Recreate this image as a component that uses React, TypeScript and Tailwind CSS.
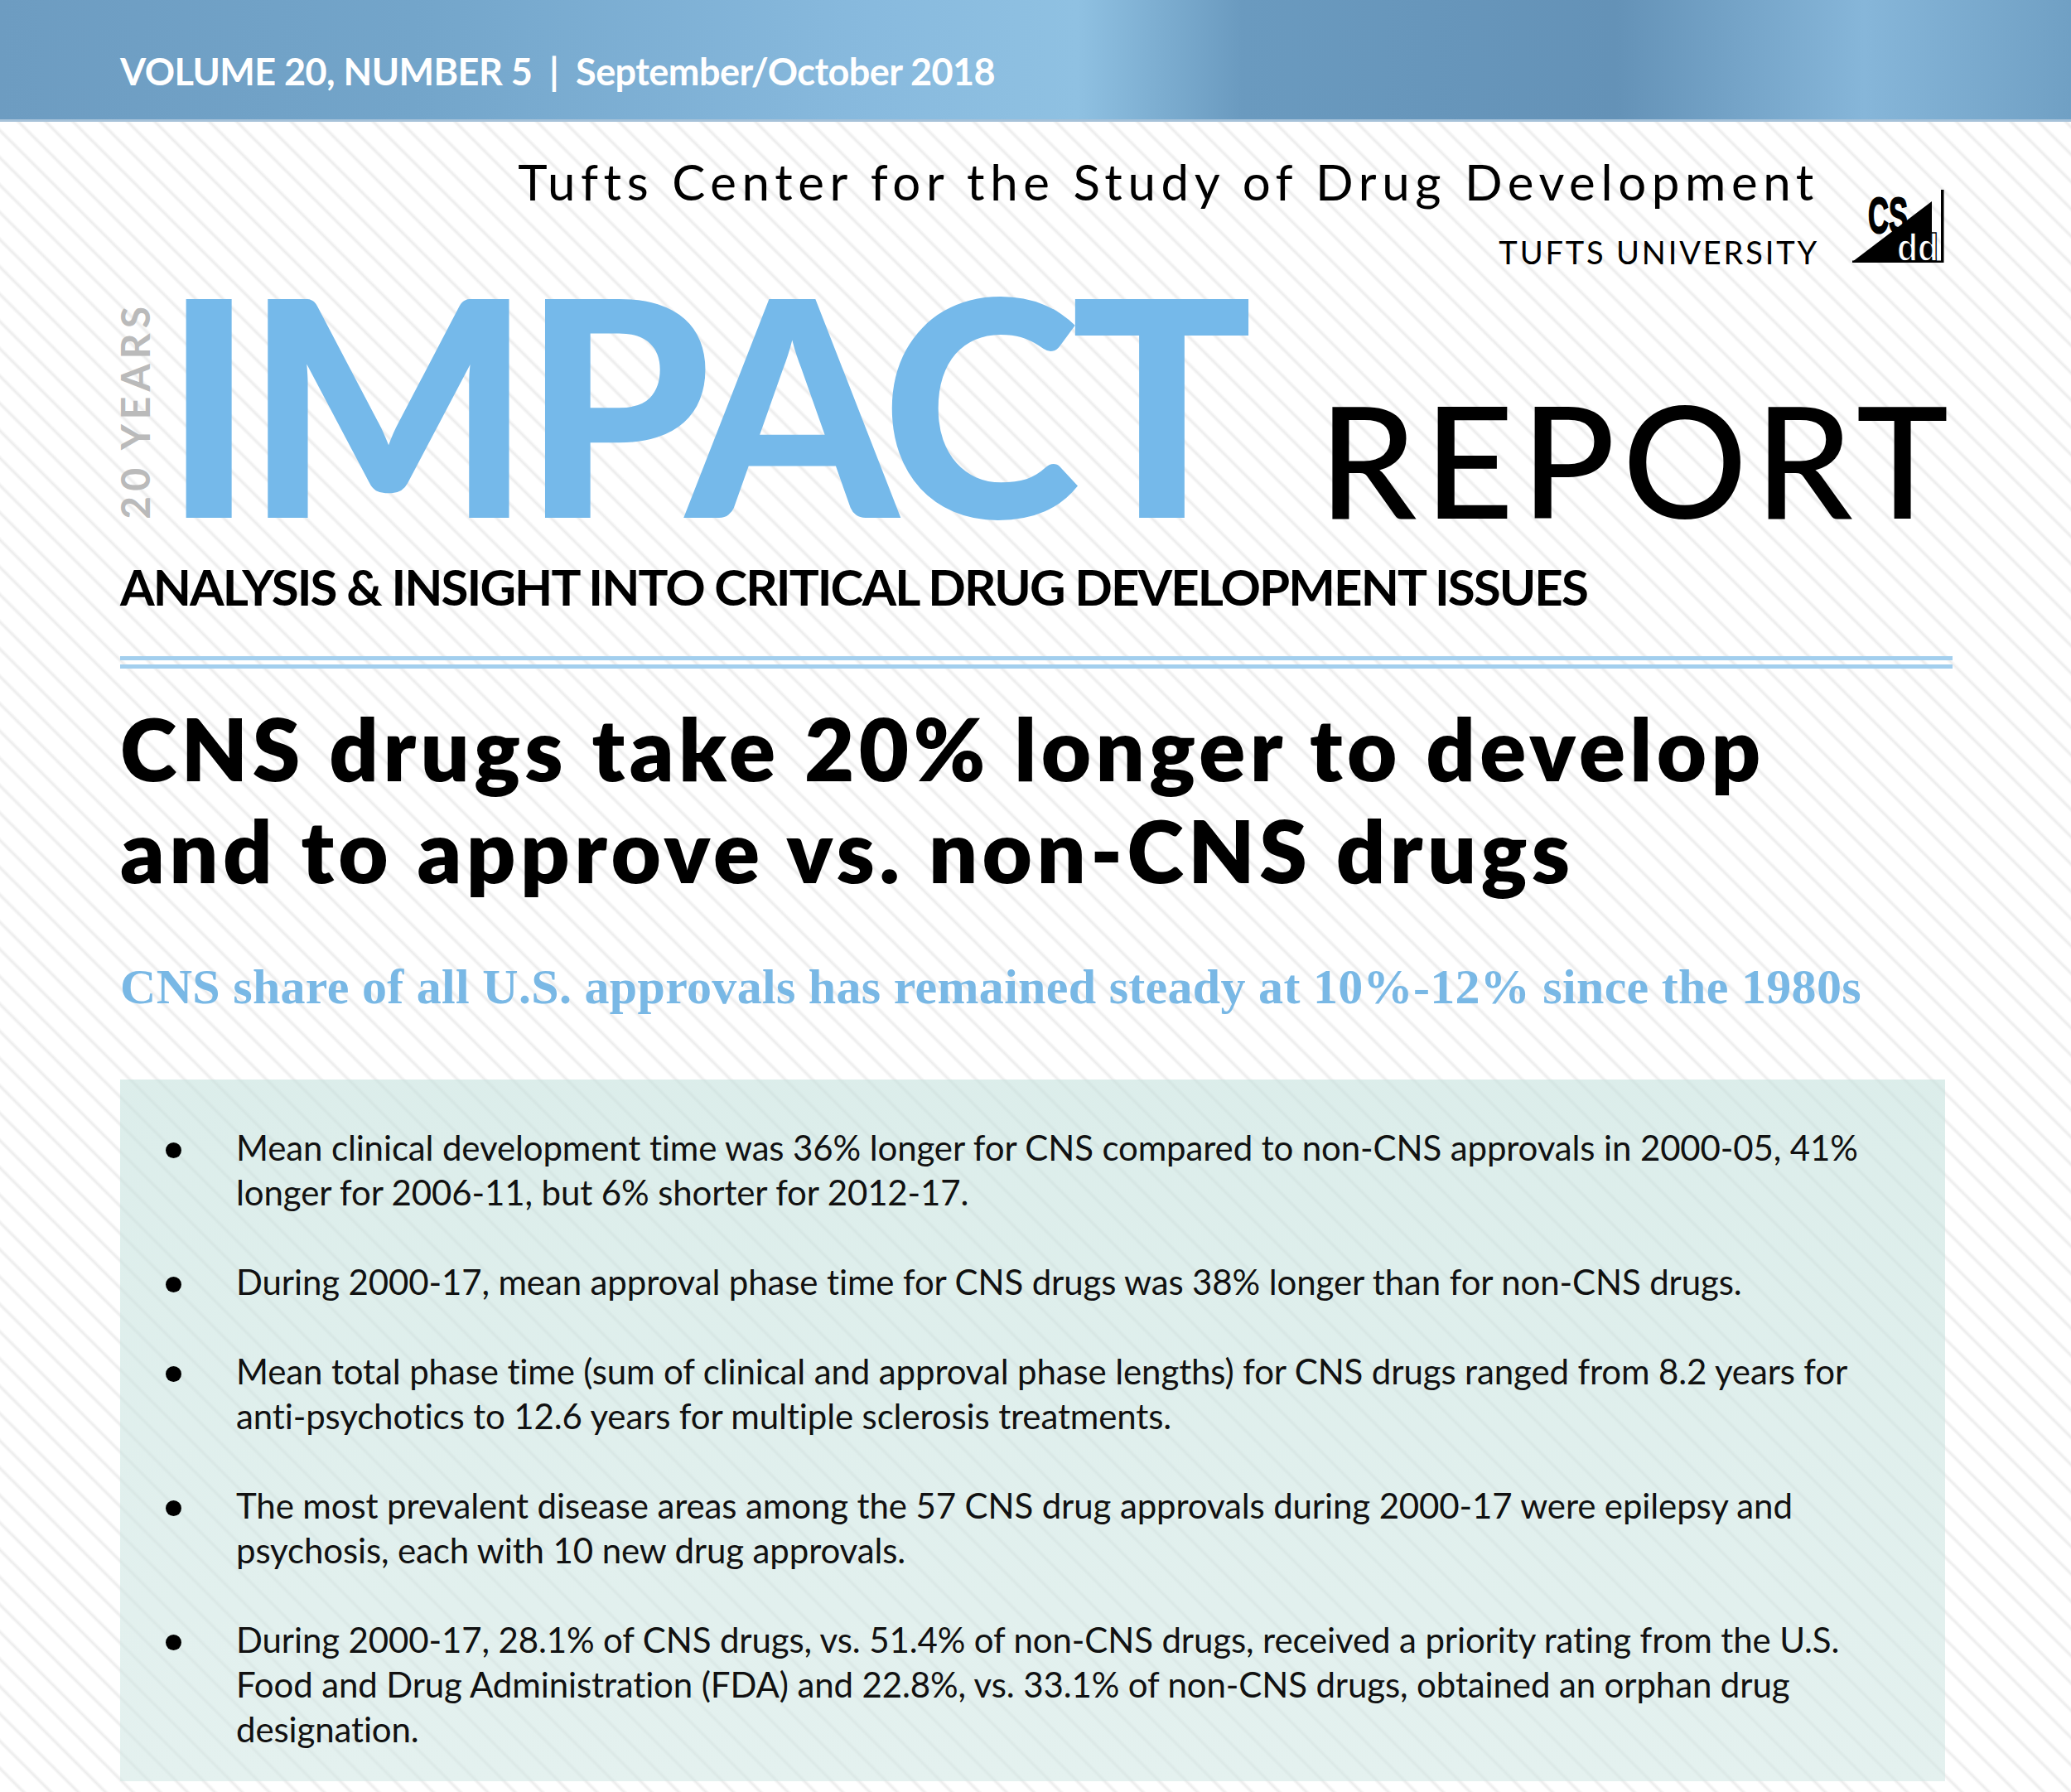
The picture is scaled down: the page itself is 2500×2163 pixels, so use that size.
const bullets: string[][] = [
  [
    "Mean clinical development time was 36% longer for CNS compared to non-CNS approvals in 2000-05, 41%",
    "longer for 2006-11, but 6% shorter for 2012-17.",
  ],
  ["During 2000-17, mean approval phase time for CNS drugs was 38% longer than for non-CNS drugs."],
  [
    "Mean total phase time (sum of clinical and approval phase lengths) for CNS drugs ranged from 8.2 years for",
    "anti-psychotics to 12.6 years for multiple sclerosis treatments.",
  ],
  [
    "The most prevalent disease areas among the 57 CNS drug approvals during 2000-17 were epilepsy and",
    "psychosis, each with 10 new drug approvals.",
  ],
  [
    "During 2000-17, 28.1% of CNS drugs, vs. 51.4% of non-CNS drugs, received a priority rating from the U.S.",
    "Food and Drug Administration (FDA) and 22.8%, vs. 33.1% of non-CNS drugs, obtained an orphan drug",
    "designation.",
  ],
];

// small CSDD mark next to the university name
const Logo = () => (
  <svg width="112" height="88" viewBox="0 0 112 88" overflow="visible">
    <text
      x="19"
      y="52"
      fontSize="62"
      fontWeight="700"
      fontFamily="Liberation Sans, Arial, sans-serif"
      textLength="48"
      lengthAdjust="spacingAndGlyphs"
      fill="#000"
      stroke="#000"
      strokeWidth="2"
    >
      CS
    </text>
    <polygon points="0,87 96,14 96,87" fill="#000" />
    <text
      x="54"
      y="86"
      fontSize="46"
      fontWeight="700"
      fontFamily="Liberation Sans, Arial, sans-serif"
      textLength="50"
      lengthAdjust="spacingAndGlyphs"
      fill="#fff"
      stroke="#000"
      strokeWidth="1.5"
    >
      dd
    </text>
    <rect x="107" y="0" width="3.5" height="88" fill="#000" />
    <rect x="0" y="85.5" width="110" height="2.5" fill="#000" />
  </svg>
);

export default function App() {
  return (
    <div className="relative w-[2500px] h-[2163px] overflow-hidden bg-white bg-fixed bg-[repeating-linear-gradient(45deg,#ffffff_0px,#ffffff_17px,#ececec_20px,#ffffff_23.3px)] font-['Lato',sans-serif] text-black">
      {/* top banner */}
      <div className="h-[147px] pt-[64px] pl-[145px] border-b-[3px] border-[#a6c2d9] bg-[linear-gradient(90deg,#6d9cc1_0%,#73a5ca_20%,#88bade_42%,#8fc1e2_52%,#6a9abf_60%,#6492b7_78%,#86b6d9_90%,#70a0c4_100%)]">
        <p className="text-[45px] leading-none font-bold text-white tracking-[-0.012em] whitespace-nowrap">
          VOLUME 20, NUMBER 5&nbsp;&nbsp;|&nbsp;&nbsp;September/October 2018
        </p>
      </div>

      <div className="pl-[145px] pr-[152px]">
        {/* masthead */}
        <div className="flex justify-end items-start mt-[42px]">
          <div className="flex flex-col items-end">
            <p className="text-[60px] leading-none tracking-[0.11em] whitespace-nowrap">
              Tufts Center for the Study of Drug Development
            </p>
            <p className="mt-[36px] text-[38px] leading-none tracking-[0.075em] whitespace-nowrap">
              TUFTS UNIVERSITY
            </p>
          </div>
          <div className="ml-[40px] mt-[40px]">
            <Logo />
          </div>
        </div>

        {/* IMPACT REPORT */}
        <div className="flex items-baseline justify-between mt-[16px]">
          <div className="flex items-end">
            <span className="-ml-[6px] mb-[4px] [writing-mode:vertical-rl] rotate-180 text-[48px] leading-none font-bold tracking-[0.125em] text-[#bababa]">
              20 YEARS
            </span>
            <span className="ml-[10px] text-[364px] leading-[0.8] font-black text-[#75b9ea] tracking-[-0.032em]">
              IMPACT
            </span>
          </div>
          <span className="text-[188px] leading-none font-medium tracking-[0.046em] -mr-[13px]">REPORT</span>
        </div>

        <p className="mt-[31px] text-[60px] leading-none font-bold tracking-[-0.032em] whitespace-nowrap">
          ANALYSIS &amp; INSIGHT INTO CRITICAL DRUG DEVELOPMENT ISSUES
        </p>

        <div className="mt-[54px] w-[2212px]">
          <div className="h-[5px] bg-[#a3cfee]" />
          <div className="h-[5px] mt-[5px] bg-[#a3cfee]" />
        </div>

        <h1 className="mt-[34px] text-[104px] leading-[123px] font-extrabold tracking-[0.052em] whitespace-nowrap">
          <span className="block">CNS drugs take 20% longer to develop</span>
          <span className="block">and to approve vs. non-CNS drugs</span>
        </h1>

        <p className="mt-[74px] font-['Liberation_Serif',serif] font-bold text-[60px] leading-none tracking-[0.005em] text-[#79b8e5] whitespace-nowrap">
          CNS share of all U.S. approvals has remained steady at 10%-12% since the 1980s
        </p>

        {/* key findings */}
        <div className="mt-[82px] pt-[55px] pb-[36px] bg-fixed bg-[repeating-linear-gradient(45deg,transparent_0px,transparent_17px,rgba(0,0,0,0.035)_20px,transparent_23.3px),linear-gradient(180deg,#d0e8e4,#e4f1ef)]">
          <ul className="flex flex-col gap-[54px]">
            {bullets.map((lines, i) => (
              <li key={i} className="flex">
                <span className="shrink-0 ml-[55px] mt-[21px] w-[19px] h-[19px] rounded-full bg-black" />
                <span className="ml-[66px] text-[42px] leading-[54px] tracking-[-0.003em] text-[#111]">
                  {lines.map((l, j) => (
                    <span key={j} className="block whitespace-nowrap">
                      {l}
                    </span>
                  ))}
                </span>
              </li>
            ))}
          </ul>
        </div>
      </div>
    </div>
  );
}
